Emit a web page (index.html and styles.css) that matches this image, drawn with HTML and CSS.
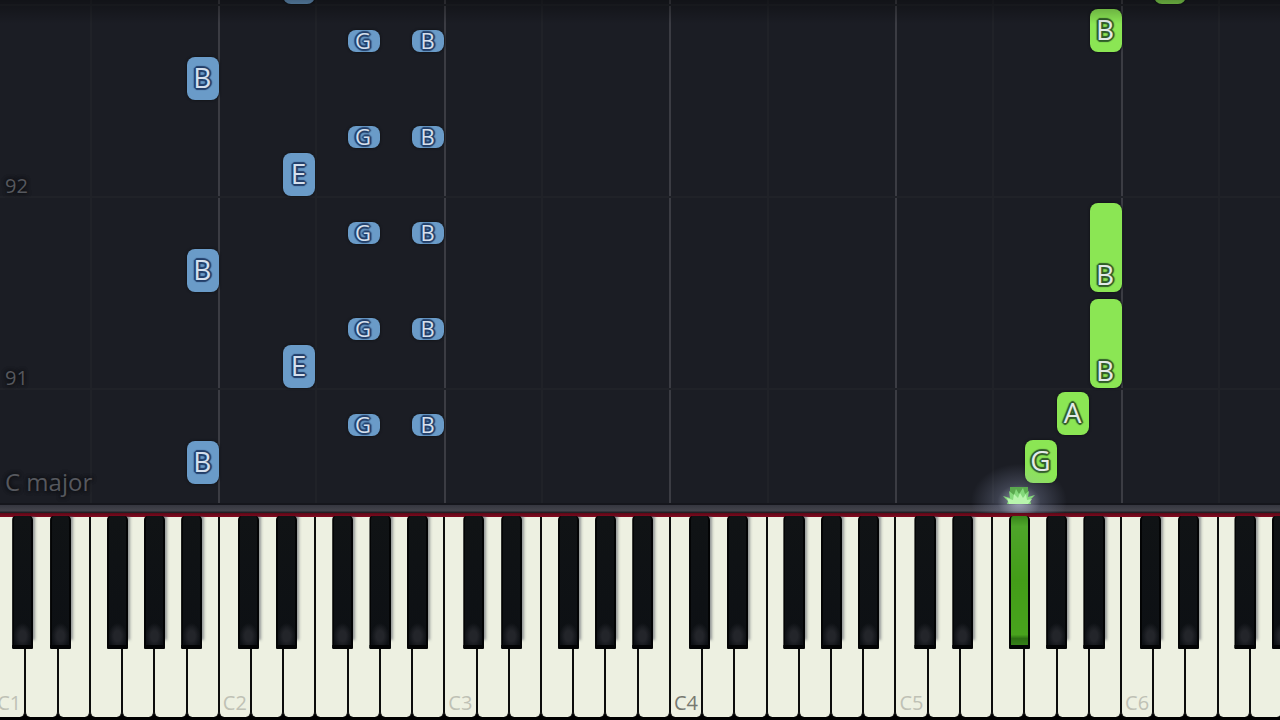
FILE: index.html
```html
<!DOCTYPE html>
<html lang="en">
<head>
<meta charset="utf-8">
<title>Piano roll</title>
<link rel="stylesheet" href="styles.css">
</head>
<body>
<main class="player">
  <section class="roll" aria-label="Falling notes">
    <div class="lanes">
      <div class="lane"></div><div class="lane"></div><div class="lane"></div>
      <div class="lane"></div><div class="lane"></div><div class="lane"></div>
    </div>
    <div class="measure m93"></div>
    <div class="measure m92"><span>92</span></div>
    <div class="measure m91"><span>91</span></div>
    <p class="signature">C major</p>

    <div class="note left e2" style="top:-39px"></div>
    <div class="note left short g2" style="top:30px">G</div>
    <div class="note left short b2" style="top:30px">B</div>
    <div class="note left b1" style="top:57px">B</div>
    <div class="note left short g2" style="top:126px">G</div>
    <div class="note left short b2" style="top:126px">B</div>
    <div class="note left e2" style="top:153px">E</div>
    <div class="note left short g2" style="top:222px">G</div>
    <div class="note left short b2" style="top:222px">B</div>
    <div class="note left b1" style="top:249px">B</div>
    <div class="note left short g2" style="top:318px">G</div>
    <div class="note left short b2" style="top:318px">B</div>
    <div class="note left e2" style="top:345px">E</div>
    <div class="note left short g2" style="top:414px">G</div>
    <div class="note left short b2" style="top:414px">B</div>
    <div class="note left b1" style="top:441px">B</div>

    <div class="note right d6" style="top:-39px"></div>
    <div class="note right b5" style="top:9px">B</div>
    <div class="note right long b5" style="top:203px">B</div>
    <div class="note right long b5" style="top:299px">B</div>
    <div class="note right a5" style="top:392px">A</div>
    <div class="note right g5" style="top:440px">G</div>
    <div class="shade"></div>
  </section>

  <div class="rail">
    <div class="glow"></div>
    <svg class="spark" viewBox="0 0 32 18" aria-hidden="true">
      <path d="M7 1h18v12H7z" fill="#5aa94e"/>
      <path d="M4 18 5 15 0 10l7 2-1-7 5 4 2-6 3 5 4-6 2 6 4-3-1 6 7-2-5 5 1 4z" fill="#84d97b"/>
      <path d="M6 18 4 12l6 2 1-6 4 4 2-5 3 5 3-4 1 6 5-1-4 5z" fill="#b8f5ad"/>
    </svg>
  </div>
  <div class="felt"></div>

  <section class="keyboard" aria-label="Keyboard">
    <div class="octave">
      <button class="white">C1</button><button class="white" aria-label="D1"></button><button class="white" aria-label="E1"></button><button class="white" aria-label="F1"></button><button class="white" aria-label="G1"></button><button class="white" aria-label="A1"></button><button class="white" aria-label="B1"></button>
      <button class="black cs" aria-label="C♯1"></button><button class="black ds" aria-label="D♯1"></button><button class="black fs" aria-label="F♯1"></button><button class="black gs" aria-label="G♯1"></button><button class="black as" aria-label="A♯1"></button>
    </div>
    <div class="octave">
      <button class="white">C2</button><button class="white" aria-label="D2"></button><button class="white" aria-label="E2"></button><button class="white" aria-label="F2"></button><button class="white" aria-label="G2"></button><button class="white" aria-label="A2"></button><button class="white" aria-label="B2"></button>
      <button class="black cs" aria-label="C♯2"></button><button class="black ds" aria-label="D♯2"></button><button class="black fs" aria-label="F♯2"></button><button class="black gs" aria-label="G♯2"></button><button class="black as" aria-label="A♯2"></button>
    </div>
    <div class="octave">
      <button class="white">C3</button><button class="white" aria-label="D3"></button><button class="white" aria-label="E3"></button><button class="white" aria-label="F3"></button><button class="white" aria-label="G3"></button><button class="white" aria-label="A3"></button><button class="white" aria-label="B3"></button>
      <button class="black cs" aria-label="C♯3"></button><button class="black ds" aria-label="D♯3"></button><button class="black fs" aria-label="F♯3"></button><button class="black gs" aria-label="G♯3"></button><button class="black as" aria-label="A♯3"></button>
    </div>
    <div class="octave">
      <button class="white middle">C4</button><button class="white" aria-label="D4"></button><button class="white" aria-label="E4"></button><button class="white" aria-label="F4"></button><button class="white" aria-label="G4"></button><button class="white" aria-label="A4"></button><button class="white" aria-label="B4"></button>
      <button class="black cs" aria-label="C♯4"></button><button class="black ds" aria-label="D♯4"></button><button class="black fs" aria-label="F♯4"></button><button class="black gs" aria-label="G♯4"></button><button class="black as" aria-label="A♯4"></button>
    </div>
    <div class="octave">
      <button class="white">C5</button><button class="white" aria-label="D5"></button><button class="white" aria-label="E5"></button><button class="white" aria-label="F5"></button><button class="white" aria-label="G5"></button><button class="white" aria-label="A5"></button><button class="white" aria-label="B5"></button>
      <button class="black cs" aria-label="C♯5"></button><button class="black ds" aria-label="D♯5"></button><button class="black fs pressed" aria-label="F♯5"></button><button class="black gs" aria-label="G♯5"></button><button class="black as" aria-label="A♯5"></button>
    </div>
    <div class="octave">
      <button class="white">C6</button><button class="white" aria-label="D6"></button><button class="white" aria-label="E6"></button><button class="white" aria-label="F6"></button><button class="white" aria-label="G6"></button><button class="white" aria-label="A6"></button><button class="white" aria-label="B6"></button>
      <button class="black cs" aria-label="C♯6"></button><button class="black ds" aria-label="D♯6"></button><button class="black fs" aria-label="F♯6"></button><button class="black gs" aria-label="G♯6"></button><button class="black as" aria-label="A♯6"></button>
    </div>
  </section>
</main>
</body>
</html>
```

FILE: styles.css
```css
* { box-sizing: border-box; }

body {
  margin: 0;
  background: #000;
  font-family: "Open Sans", "Noto Sans", sans-serif;
}

.player {
  display: flex;
  flex-direction: column;
  min-height: 100vh;
  overflow: hidden;
}

/* Falling notes */
.roll {
  position: relative;
  flex: 1;
  overflow: hidden;
  background: #1b1d24;
  border-bottom: 2px solid #15161c;
}

.lanes {
  position: absolute;
  inset: 0 -5.2% 0 -0.6%;
  display: flex;
}

.lane {
  flex: 1;
  border-left: 2px solid #3b3c43;
  background: linear-gradient(#202228, #202228) 43% 0 / 2px 100% no-repeat;
}

.measure {
  position: absolute;
  left: 0;
  right: 0;
  height: 28px;
  padding-left: 5px;
  border-bottom: 2px solid #202228;
  color: #56585e;
  font-size: 20px;
  line-height: 32px;
  text-shadow: 0 0 4px #0b0c0f, 0 0 4px #0b0c0f;
}

.m93 { top: -22px; }
.m92 { top: 170px; }
.m91 { top: 362px; }

.signature {
  position: absolute;
  left: 5px;
  bottom: 5px;
  margin: 0;
  color: #56585e;
  font-size: 24px;
  line-height: 32px;
  text-shadow: 0 0 4px #0b0c0f, 0 0 4px #0b0c0f;
}

.note {
  position: absolute;
  display: flex;
  align-items: flex-end;
  justify-content: center;
  width: 2.5%;
  height: 43px;
  padding: 0 1px 3px 0;
  border-radius: 8px;
  box-shadow: 0 0 2px 1px #14161b;
  font-size: 28px;
  line-height: 40px;
  --edge: #24406b;
  text-shadow: 2px 0 1px var(--edge), -2px 0 1px var(--edge), 0 2px 1px var(--edge), 0 -2px 1px var(--edge),
    1px 1px 1px var(--edge), -1px 1px 1px var(--edge), 1px -1px 1px var(--edge), -1px -1px 1px var(--edge);
}

.left { background: #6a9bc8; color: #d5e0ee; }
.right { background: #8be654; color: #e3eae8; --edge: #315c2a; }

.short {
  height: 22px;
  padding-bottom: 1px;
  font-size: 22px;
  line-height: 22px;
}

.long {
  height: 89px;
  padding-bottom: 0;
  line-height: 36px;
}

.b1 { left: 14.6%; }
.e2 { left: 22.11%; }
.g2 { left: 27.15%; }
.b2 { left: 32.19%; }
.g5 { left: 80.08%; }
.a5 { left: 82.58%; }
.b5 { left: 85.12%; }
.d6 { left: 90.16%; }

.shade {
  position: absolute;
  inset: 0 0 auto;
  height: 24px;
  background: linear-gradient(rgba(0, 0, 0, .35), rgba(0, 0, 0, 0));
}

/* Strip between the notes and the keys */
.rail {
  position: relative;
  height: 8px;
  background: linear-gradient(#35363f, #43434b 70%, #17171b);
}

.glow {
  position: absolute;
  left: 79.6%;
  bottom: 0;
  width: 96px;
  height: 56px;
  transform: translateX(-50%);
  background: radial-gradient(ellipse 48px 38px at 50% 80%, rgba(220, 228, 255, .65), rgba(160, 170, 205, .25) 45%, rgba(120, 130, 160, 0));
}

.spark {
  position: absolute;
  left: 79.6%;
  bottom: 9px;
  width: 32px;
  height: 18px;
  transform: translateX(-50%);
}

.felt {
  height: 4px;
  background: linear-gradient(#5c0917, #850a20);
}

/* Keys */
.keyboard {
  display: flex;
  height: 203px;
  margin-left: -0.53%;
  margin-right: -5.2%;
  background: #000;
}

.octave {
  position: relative;
  display: flex;
  flex: 1;
  padding-bottom: 3px;
}

button {
  margin: 0;
  padding: 0;
  border: 0;
  font-family: inherit;
}

.white {
  display: flex;
  align-items: flex-end;
  flex: 1 1 0;
  min-width: 0;
  padding-left: 3px;
  border: solid #0c0d0c;
  border-width: 0 1px;
  border-radius: 0 0 5px 5px;
  background: #edf0e1;
  color: #bfc1b5;
  font-size: 20px;
  line-height: 28px;
}

.middle { color: #777970; }

.black {
  position: absolute;
  top: -1px;
  width: 9.4%;
  height: 133px;
  border: solid #030405;
  border-width: 0 2px 4px;
  border-radius: 4px 4px 1px 1px;
  background:
    radial-gradient(ellipse 9px 13px at 50% 93%, #23252a 40%, rgba(35, 37, 42, 0)),
    linear-gradient(#101315, #0d1014);
  box-shadow: 3px -8px 3px -1px rgba(70, 72, 85, .55);
  clip-path: inset(0 -8px 0 0);
}

.cs { left: 8.4%; }
.ds { left: 25.2%; }
.fs { left: 50.3%; }
.gs { left: 66.8%; }
.as { left: 83.3%; }

.pressed {
  background: linear-gradient(#38851b, #4ea52a 8%, #439d18 50%, #48a31d 92%, #2c7012 95%, #348018);
  box-shadow: none;
}
```
